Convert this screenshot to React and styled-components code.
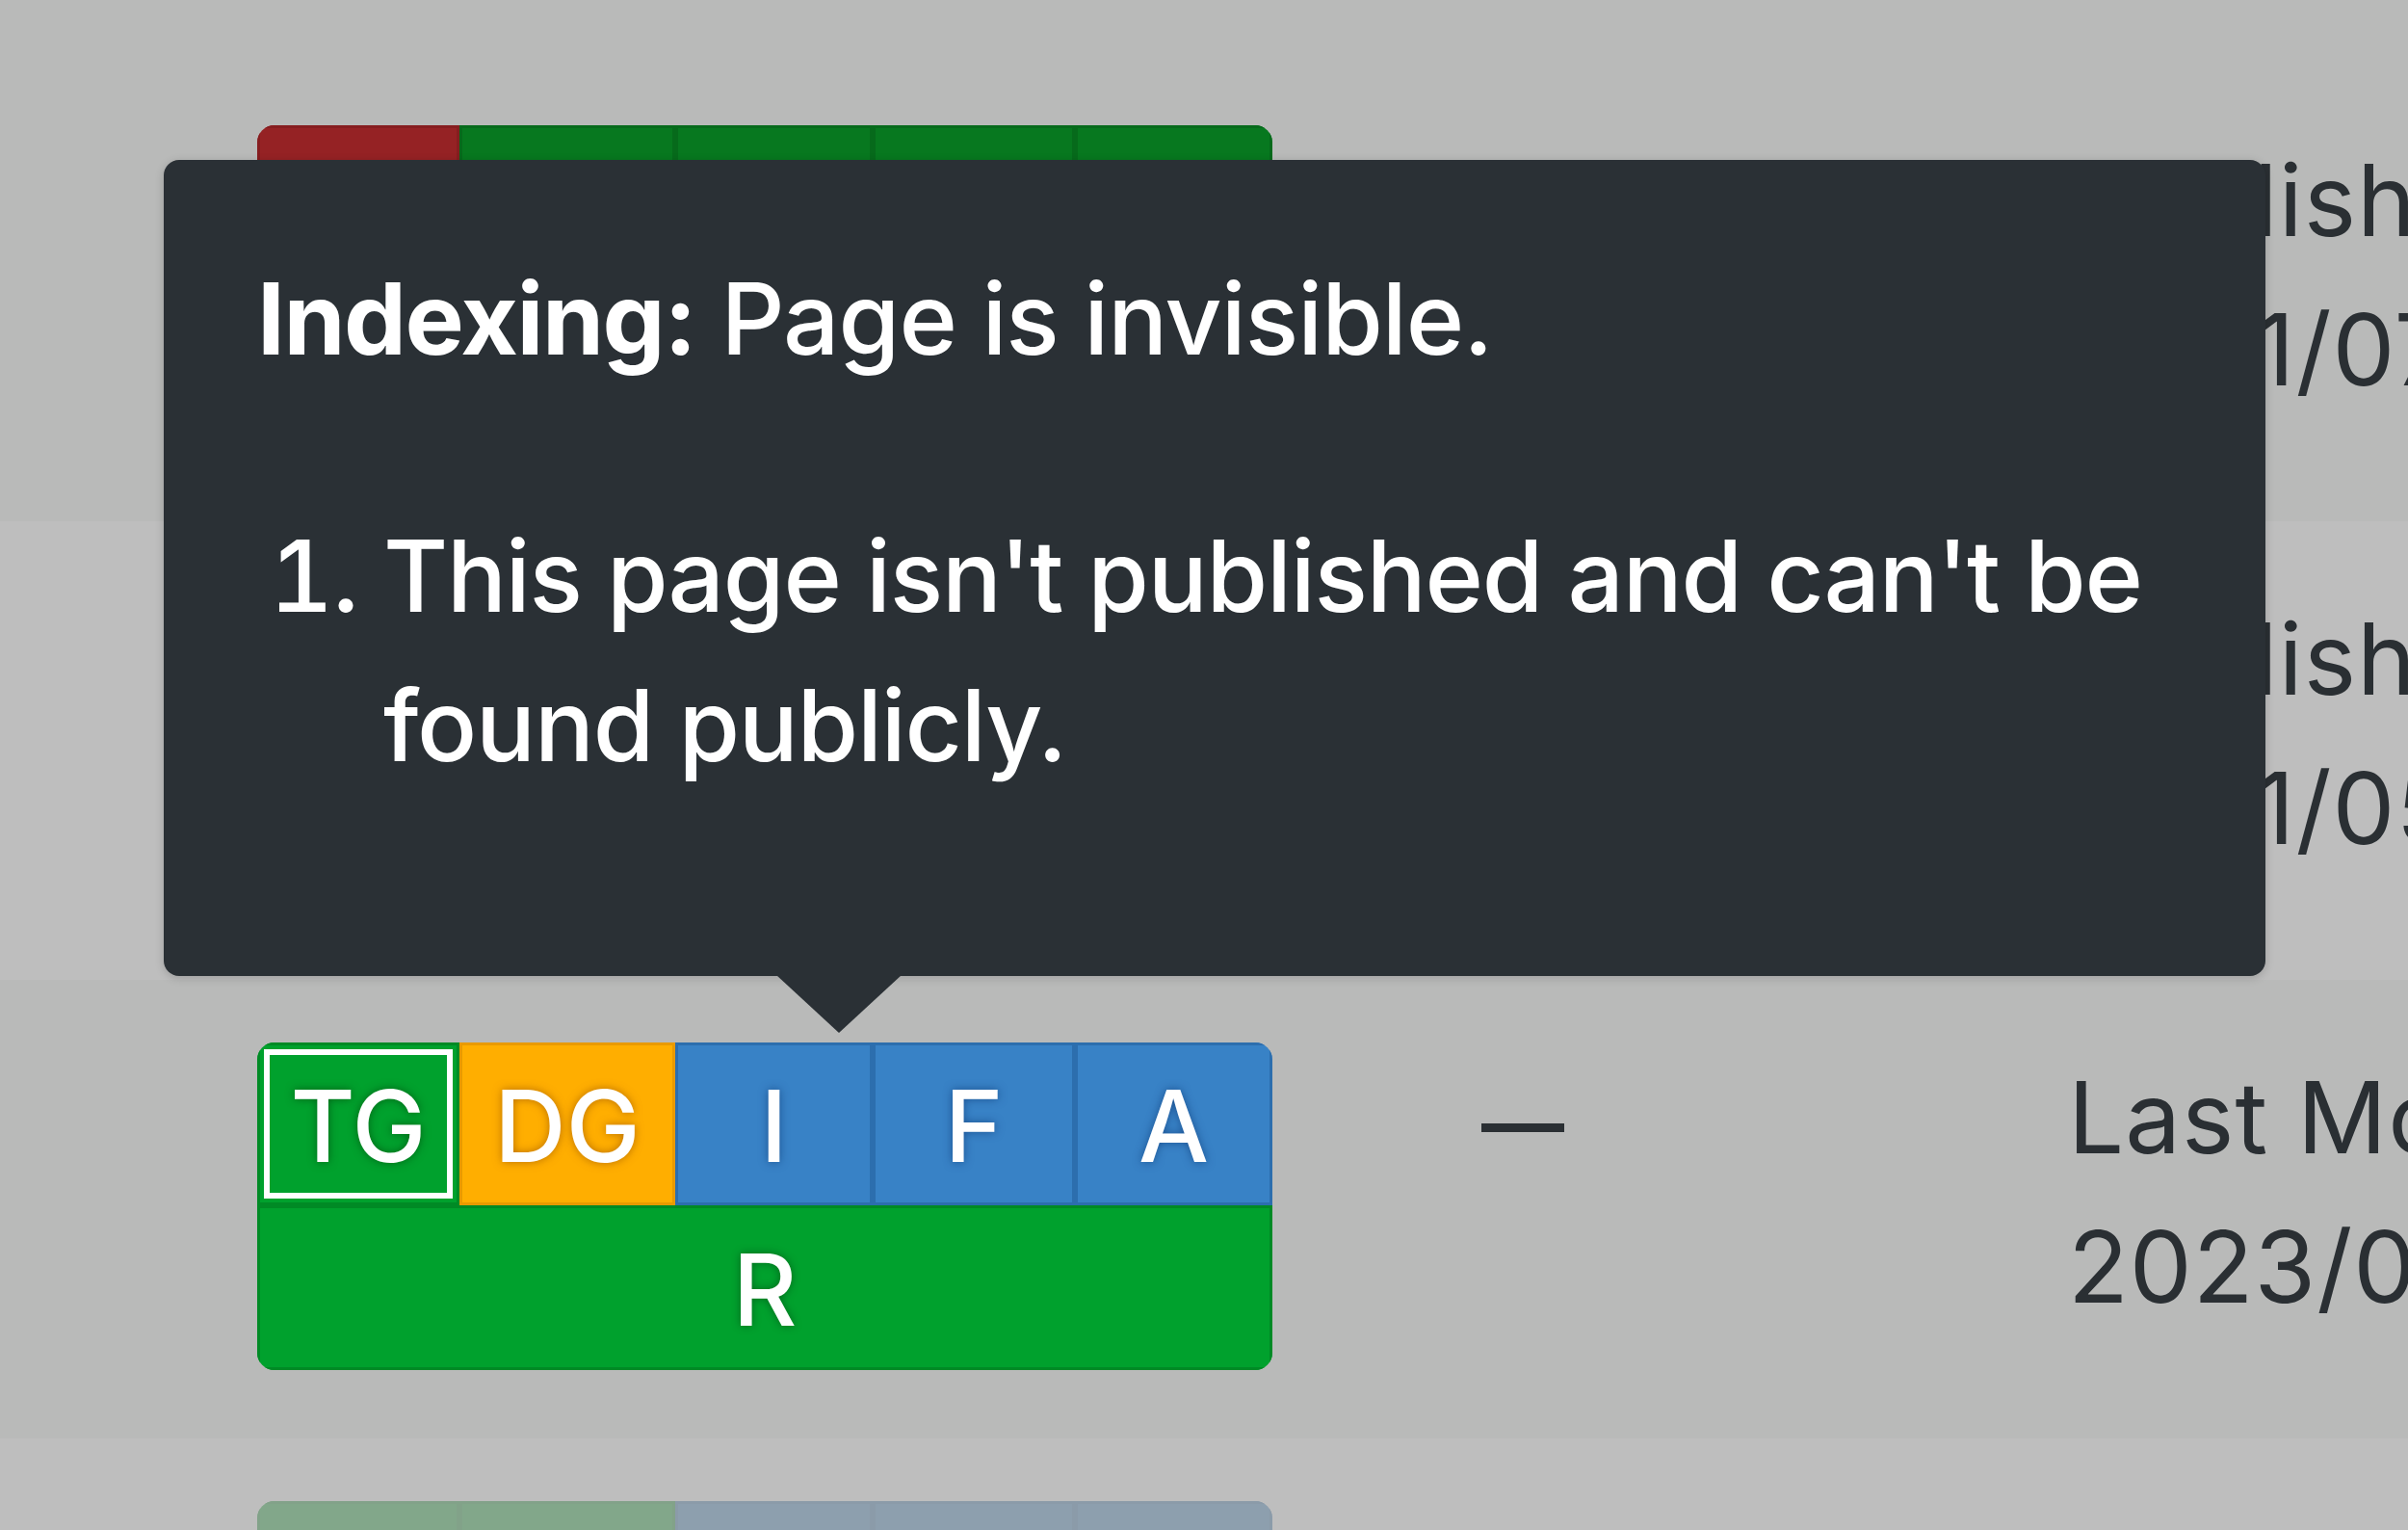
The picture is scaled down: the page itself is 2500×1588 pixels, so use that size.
import React from "react";
import styled, { createGlobalStyle, css } from "styled-components";

const Global = createGlobalStyle`
  html, body {
    margin: 0;
    padding: 0;
    width: 2500px;
    height: 1588px;
    overflow: hidden;
    background: #b9bab9;
    font-family: Inter, "Noto Sans", "Liberation Sans", sans-serif;
  }
  * { box-sizing: border-box; }
`;

const Page = styled.div`
  position: relative;
  width: 2500px;
  height: 1588px;
  overflow: hidden;
`;

const Spacer = styled.div`
  height: 65px;
  background: #b9bab9;
`;

const Row = styled.div`
  height: 476px;
  background: ${(p) => (p.$alt ? "#bebebe" : "#b9bab9")};
  display: grid;
  grid-template-columns: 1054px 826px 1fr;
  align-items: start;
  padding: 65px 0 0 267px;
`;

const bright = {
  green: { bg: "#00a12d", edge: "#008a25" },
  orange: { bg: "#ffae00", edge: "#e99a00" },
  blue: { bg: "#3882c6", edge: "#2c6eae" },
  red: { bg: "#cc2f31", edge: "#b02426" },
};

const dim = {
  green: { bg: "#07781f", edge: "#066a1b" },
  blue: { bg: "#29608f", edge: "#22537e" },
  red: { bg: "#952224", edge: "#861d1f" },
  orange: { bg: "#ba8000", edge: "#a97300" },
};

const Badge = styled.div`
  display: grid;
  grid-template-columns: 210px 224px 205px 210px 1fr;
  grid-template-rows: 169px 171px;
  width: 1054px;
  border-radius: 18px;
  overflow: hidden;
  opacity: ${(p) => p.$opacity ?? 1};
`;

const Cell = styled.div`
  display: flex;
  align-items: center;
  justify-content: center;
  background: ${(p) => p.$c.bg};
  box-shadow: inset 0 0 0 3px ${(p) => p.$c.edge};
  color: #fff;
  font-family: Inter, "Liberation Sans", sans-serif;
  font-size: 103px;
  font-weight: 500;
  line-height: 1;
  padding-top: 4px;
  text-shadow: 0 0 10px ${(p) => p.$shadow || "rgba(0,0,0,0.35)"};
  ${(p) =>
    p.$selected &&
    css`
      outline: 6px solid #ffffff;
      outline-offset: -13px;
    `}
  ${(p) =>
    p.$wide &&
    css`
      grid-column: 1 / -1;
    `}
`;

const Text = styled.div`
  font-family: Inter, "Liberation Sans", sans-serif;
  font-size: 103px;
  line-height: 155px;
  color: #2a2f33;
  letter-spacing: 1px;
  white-space: nowrap;
`;

const Dash = styled(Text)`
  padding-left: 217px;
  font-size: 86px;
  font-weight: 600;
  letter-spacing: 0;
  margin-top: 7px;
`;

const Tooltip = styled.div`
  position: absolute;
  left: 170px;
  top: 166px;
  width: 2182px;
  height: 847px;
  background: #2a3035;
  border-radius: 16px;
  padding: 87px 96px 0 97px;
  color: #ffffff;
  font-family: Inter, "Liberation Sans", sans-serif;
  font-size: 103px;
  font-weight: 500;
  line-height: 155px;
  box-shadow: 0 2px 10px rgba(0, 0, 0, 0.18);
  &::after {
    content: "";
    position: absolute;
    left: 636px;
    bottom: -59px;
    width: 0;
    height: 0;
    border-left: 65px solid transparent;
    border-right: 65px solid transparent;
    border-top: 60px solid #2a3035;
  }
`;

const TipTitle = styled.p`
  margin: 0;
  letter-spacing: -1px;
  strong {
    font-weight: 700;
    letter-spacing: -1.5px;
  }
`;

const TipList = styled.ol`
  margin: 112px 0 0 0;
  padding-left: 131px;
  letter-spacing: -1.2px;
`;

function StatusBadge({ tones, bottom, labels, bottomLabel, selectedIndex, opacity, shadows }) {
  return (
    <Badge $opacity={opacity}>
      {tones.map((t, i) => (
        <Cell
          key={i}
          $c={t}
          $selected={i === selectedIndex}
          $shadow={shadows ? shadows[i] : undefined}
        >
          {labels ? labels[i] : null}
        </Cell>
      ))}
      <Cell $c={bottom} $wide>
        {bottomLabel}
      </Cell>
    </Badge>
  );
}

const labels = ["TG", "DG", "I", "F", "A"];

export default function App() {
  return (
    <Page>
      <Global />
      <Spacer />
      <Row>
        <StatusBadge
          tones={[dim.red, dim.green, dim.green, dim.green, dim.green]}
          bottom={dim.green}
        />
        <Text />
        <Text>
          Published
          <br />
          2021/07/14
        </Text>
      </Row>
      <Row $alt>
        <StatusBadge
          tones={[dim.green, dim.green, dim.green, dim.green, dim.green]}
          bottom={dim.green}
        />
        <Text />
        <Text>
          Published
          <br />
          2021/05/20
        </Text>
      </Row>
      <Row>
        <StatusBadge
          tones={[bright.green, bright.orange, bright.blue, bright.blue, bright.blue]}
          bottom={bright.green}
          labels={labels}
          bottomLabel="R"
          selectedIndex={0}
          shadows={[
            "rgba(0,60,10,0.6)",
            "rgba(160,90,0,0.75)",
            "rgba(10,50,110,0.6)",
            "rgba(10,50,110,0.6)",
            "rgba(10,50,110,0.6)",
          ]}
        />
        <Dash>—</Dash>
        <Text>
          Last Modified
          <br />
          2023/07/18
        </Text>
      </Row>
      <Row $alt>
        <StatusBadge
          tones={[dim.green, dim.green, dim.blue, dim.blue, dim.blue]}
          bottom={dim.green}
          labels={labels}
          bottomLabel="R"
          opacity={0.32}
        />
        <Text />
        <Text>
          Published
          <br />
          2021/03/02
        </Text>
      </Row>

      <Tooltip>
        <TipTitle>
          <strong>Indexing:</strong> Page is invisible.
        </TipTitle>
        <TipList>
          <li>This page isn't published and can't be found publicly.</li>
        </TipList>
      </Tooltip>
    </Page>
  );
}
